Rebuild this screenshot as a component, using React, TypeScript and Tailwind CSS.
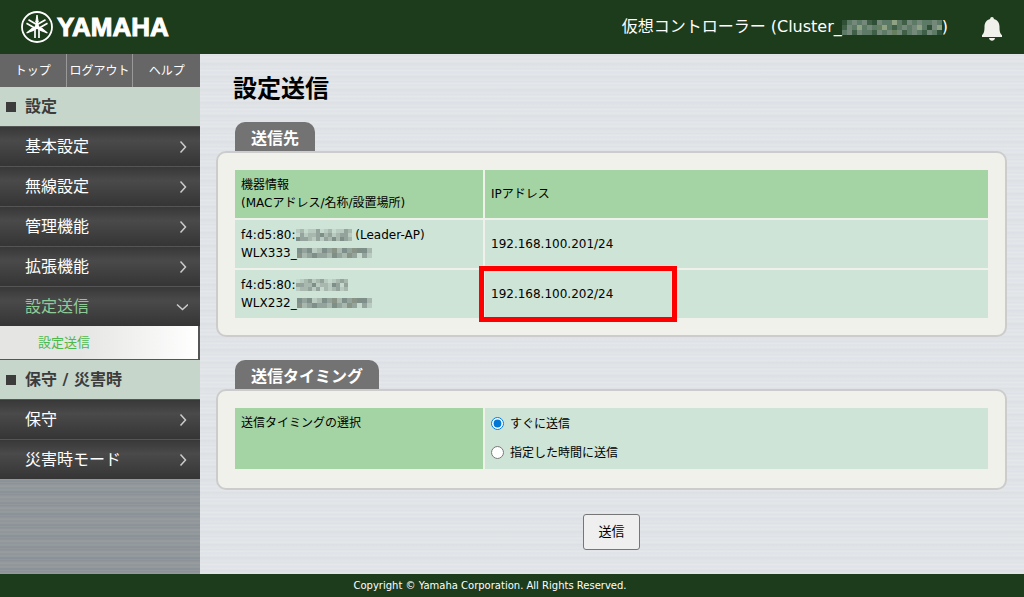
import type { ReactNode } from "react";

const menu = [
  { label: "基本設定" },
  { label: "無線設定" },
  { label: "管理機能" },
  { label: "拡張機能" },
  { label: "設定送信", open: true },
];

const maintenanceMenu = [{ label: "保守" }, { label: "災害時モード" }];

// masked serials: one string per row, each letter is a shade below
const shades: Record<string, string> = {
  a: "#7d8f88",
  b: "#94a39b",
  c: "#a9b8ae",
  d: "#b9cbc0",
  e: "#c6d9cd",
  f: "#8a9486",
};

const darkShades: Record<string, string> = {
  a: "#3f5f47",
  b: "#5d7a66",
  c: "#74897a",
  d: "#8fa384",
  e: "#2f4f37",
  f: "#66805f",
};

const nameMask = ["abadcabfcabfaac", "fcbabbcabcfbebd"];

const devices = [
  {
    mac: "f4:d5:80:",
    macMask: ["dceddbedceddbc", "ebdccbacbdcbbd", "abbcdbdbcacabc"],
    role: " (Leader-AP)",
    name: "WLX333_",
    ip: "192.168.100.201/24",
  },
  {
    mac: "f4:d5:80:",
    macMask: ["edcbdcbdedcbc", "bbccadccdabeb", "dccbdbecdcbdc"],
    role: "",
    name: "WLX232_",
    ip: "192.168.100.202/24",
    highlight: true,
  },
];

function Mosaic({
  rows,
  size,
  palette = shades,
}: {
  rows: string[];
  size: number;
  palette?: Record<string, string>;
}) {
  return (
    <svg
      width={rows[0].length * size}
      height={rows.length * size}
      shapeRendering="crispEdges"
      aria-hidden="true"
    >
      {rows.map((row, y) =>
        row
          .split("")
          .map((c, x) => (
            <rect key={`${x}-${y}`} x={x * size} y={y * size} width={size} height={size} fill={palette[c]} />
          )),
      )}
    </svg>
  );
}

function TuningForks() {
  return (
    <svg className="size-8" viewBox="0 0 32 32" fill="none" stroke="#fff" aria-hidden="true">
      <circle cx="16" cy="16" r="15" strokeWidth="1.8" />
      {[0, 120, 240].map((angle) => (
        <g key={angle} transform={`rotate(${angle} 16 16)`}>
          <path d="M16 4 L17.2 11 H14.8 Z" fill="#fff" strokeWidth="1" />
          <path d="M16 10v5" strokeWidth="2.6" />
          <path d="M14 27V18c0-3.400 4-3.400 4 0v9" strokeWidth="1.7" />
        </g>
      ))}
      <circle cx="16" cy="16" r="2.2" fill="#fff" stroke="none" />
    </svg>
  );
}

function Logo() {
  return (
    <a href="#" className="flex items-center gap-1 text-white">
      <TuningForks />
      <span className="font-['Liberation_Sans',sans-serif] text-[26px] leading-8 font-bold [-webkit-text-stroke:1px_white]">
        YAMAHA
      </span>
    </a>
  );
}

function Chevron({ down }: { down?: boolean }) {
  return (
    <svg width="12" height="12" viewBox="0 0 12 12" fill="none" stroke="#ccc" strokeWidth="1.5" aria-hidden="true">
      {down ? <path d="M1 3.500 L6.500 8.500 L12 3.500" /> : <path d="M4.500 0.500 L9.500 6 L4.500 11.500" />}
    </svg>
  );
}

function MenuHeading({ children }: { children: ReactNode }) {
  return (
    <h2 className="flex h-[39px] items-center gap-2 bg-[#c6d6cb] pl-1.5 text-base font-bold text-[#3c3c3c]">
      <span className="mr-px size-2.5 bg-[#3c3c3c]" />
      {children}
    </h2>
  );
}

function MenuItem({ label, open }: { label: string; open?: boolean }) {
  return (
    <a
      href="#"
      className={`flex h-10 items-center justify-between border-t border-[#555] bg-linear-to-b from-[#383838] via-[#4a4a4a] via-35% to-[#353535] pr-3 pl-[25px] text-base ${
        open ? "text-[#8fca98]" : "text-white"
      }`}
    >
      {label}
      <Chevron down={open} />
    </a>
  );
}

function Panel({ title, children }: { title: string; children: ReactNode }) {
  return (
    <section>
      <h2 className="ml-[19px] inline-block rounded-t-[10px] bg-[#737373] px-4 pt-1 align-bottom text-base leading-[25px] font-bold text-white">
        {title}
      </h2>
      <div className="rounded-[10px] border-2 border-[#ccc] bg-[#f0f1eb] p-[15px]">{children}</div>
    </section>
  );
}

export default function App() {
  return (
    <div className="flex min-h-screen flex-col bg-[#1d3c1b] font-['DejaVu_Sans','Noto_Sans_CJK_JP',sans-serif] text-xs text-black">
      <header className="flex h-[54px] items-center justify-between pr-5 pl-[21px]">
        <Logo />
        <div className="flex items-center gap-8 text-base text-white">
          <span className="flex items-center whitespace-pre">
            仮想コントローラー (Cluster_
            <Mosaic
              size={5}
              palette={darkShades}
              rows={["ebcbcaecbbdbacbcbbcb", "acbdbcbfdbabcbcdbecd", "bcacbbacbcfcabcbacbe"]}
            />
            )
          </span>
          <button type="button" aria-label="通知" className="mt-1">
            <svg width="24" height="26" viewBox="0 0 24 26" fill="#f0f1eb" aria-hidden="true">
              <path d="M12 1c1.200 0 1.800.8 1.900 2 3.500.9 5.600 4 5.600 7.500 0 5 .6 7 2.500 8.800V21H2v-1.700c1.900-1.800 2.500-3.800 2.500-8.800C4.500 7 6.600 3.900 10.100 3 10.200 1.800 10.800 1 12 1z" />
              <path d="M9 22h6c-.3 1.700-1.500 2.700-3 2.700S9.300 23.700 9 22z" />
            </svg>
          </button>
        </div>
      </header>

      <div className="flex flex-1">
        <aside className="w-[200px] shrink-0 bg-[repeating-linear-gradient(180deg,#8b9196_0px,#91979c_2px,#9aa09f_3px,#8e9499_5px,#969c9e_7px,#899096_9px,#949a9c_11px)]">
          <nav>
            <div className="grid h-[33px] grid-cols-3 divide-x divide-[#999] bg-[#666] text-white">
              {["トップ", "ログアウト", "ヘルプ"].map((label) => (
                <a key={label} href="#" className="flex items-center justify-center whitespace-nowrap">
                  {label}
                </a>
              ))}
            </div>
            <MenuHeading>設定</MenuHeading>
            {menu.map((item) => (
              <MenuItem key={item.label} {...item} />
            ))}
            <a
              href="#"
              className="flex h-[34px] items-center border-r-2 border-b border-[#555] bg-linear-to-r from-[#e5e5e3] from-40% to-white pl-[38px] text-[13px] text-[#4cb94c]"
            >
              設定送信
            </a>
            <MenuHeading>保守 / 災害時</MenuHeading>
            {maintenanceMenu.map((item) => (
              <MenuItem key={item.label} {...item} />
            ))}
          </nav>
        </aside>

        <main className="min-w-0 flex-1 bg-[repeating-linear-gradient(180deg,#e2e6e9_0px,#dde1e5_2px,#e6e9eb_3px,#dfe3e7_5px,#e4e7ea_8px,#dce0e4_9px,#e1e5e8_13px)] pr-[17px] pb-6 pl-4">
          <h1 className="pt-[17px] pb-[15px] pl-[17px] text-2xl leading-9 font-bold">設定送信</h1>

          <Panel title="送信先">
            <table className="w-full border-separate border-spacing-0.5 text-left leading-[18px]">
              <thead>
                <tr className="h-12 bg-[#a4d4a4]">
                  <th className="w-[248px] px-1.5 font-normal">
                    機器情報
                    <br />
                    (MACアドレス/名称/設置場所)
                  </th>
                  <th className="px-1.5 font-normal">IPアドレス</th>
                </tr>
              </thead>
              <tbody>
                {devices.map((device) => (
                  <tr key={device.name} className="h-12 bg-[#cde4d6]">
                    <td className="px-1.5">
                      <div className="flex h-[18px] items-center whitespace-pre">
                        {device.mac}
                        <Mosaic rows={device.macMask} size={4} />
                        {device.role}
                      </div>
                      <div className="flex h-[18px] items-center">
                        {device.name}
                        <Mosaic rows={nameMask} size={5} />
                      </div>
                    </td>
                    <td className="relative px-1.5">
                      {device.ip}
                      {device.highlight && (
                        <div className="pointer-events-none absolute -top-1 -left-1.5 h-14 w-[198px] border-5 border-[#f00]" />
                      )}
                    </td>
                  </tr>
                ))}
              </tbody>
            </table>
          </Panel>

          <div className="mt-[23px]">
            <Panel title="送信タイミング">
              <table className="mb-0.5 w-full border-separate border-spacing-0.5 text-left leading-[18px]">
                <tbody>
                  <tr>
                    <th id="timing" className="w-[248px] bg-[#a4d4a4] px-1.5 pt-1.5 align-top font-normal">
                      送信タイミングの選択
                    </th>
                    <td className="bg-[#cde4d6] px-1.5 pt-px pb-0.5">
                      <div role="radiogroup" aria-labelledby="timing">
                        <label className="flex h-[29px] items-center gap-1.5">
                          <input type="radio" name="timing" defaultChecked className="size-[13px] accent-[#0078d7]" />
                          すぐに送信
                        </label>
                        <label className="flex h-[29px] items-center gap-1.5">
                          <input type="radio" name="timing" className="size-[13px] accent-[#0078d7]" />
                          指定した時間に送信
                        </label>
                      </div>
                    </td>
                  </tr>
                </tbody>
              </table>
            </Panel>
          </div>

          <div className="mt-6 flex justify-center">
            <button
              type="button"
              className="h-9 rounded-[3px] border border-[#767676] bg-[#efefef] px-3.5 text-[13px]"
            >
              送信
            </button>
          </div>
        </main>
      </div>

      <footer className="h-[23px] pr-11 text-center text-[10px] leading-[23px] text-white">
        Copyright © Yamaha Corporation. All Rights Reserved.
      </footer>
    </div>
  );
}
